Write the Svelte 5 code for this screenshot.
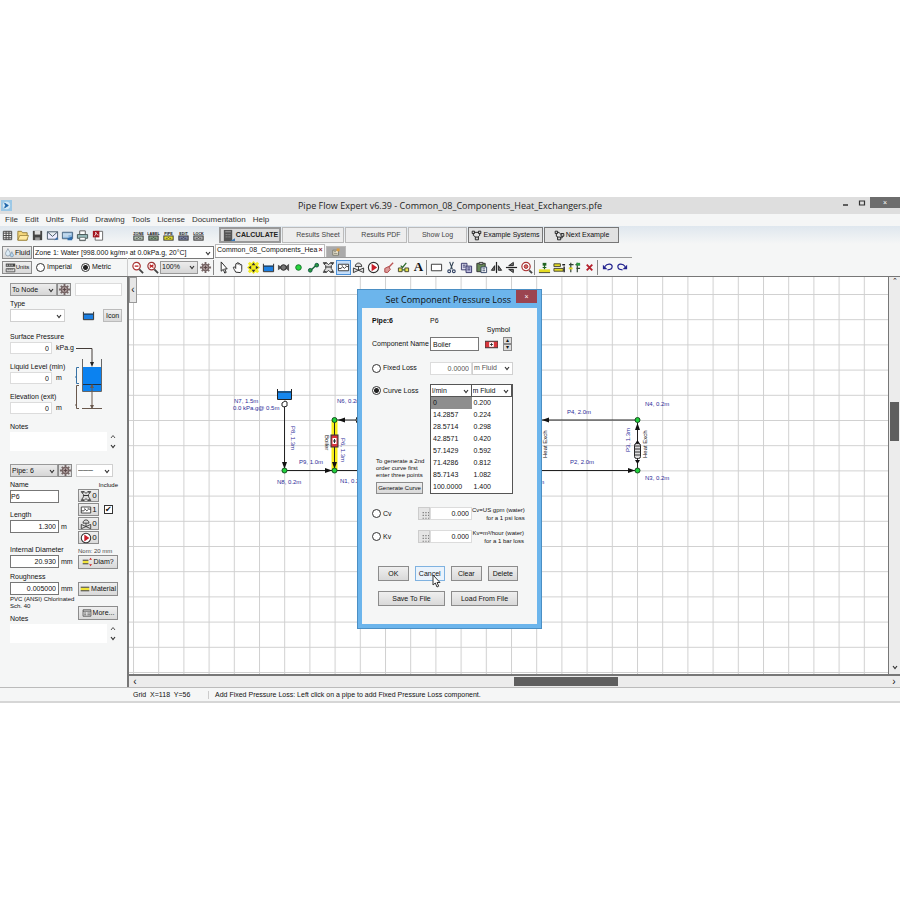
<script lang="ts">
	type Shape = [string, string?, string?, number?];

	// every icon sits on a 14 x 14 grid: [path, fill, stroke, stroke width]
	const icons: Record<string, Shape[]> = {
		sheet: [['M2.5 2.5h9v9h-9zM2.5 4.5h9M2.5 7h9M2.5 9.5h9M5.5 2.5v9M8.5 2.5v9', '#eee', '#444']],
		open: [
			['M2 4V2.5h4L7 4h5v8H2z', '#f5d77b', '#937b35'],
			['M4 7h9.500l-2 5H2z', '#ffe9a0', '#937b35', 0.8]
		],
		save: [
			['M2 2h10v10H2z', '#444'],
			['M4 2h6v4H4z', '#ddd'],
			['M4.500 9h5v3h-5z', '#999']
		],
		mail: [
			['M1.500 3h11v8h-11zM1.500 3l5.500 5 5.500-5', '#eef', '#456'],
			['M9 12l2.500-3 2 2z', '#3a70b0']
		],
		picture: [
			['M1.500 3.500h11v7h-11z', '#8fb8dd', '#46627d'],
			['M2 5.500h9M2 7.500h6', 'none', '#eef5fb'],
			['M7 10l5-2v4H7z', '#2f6cab']
		],
		print: [
			['M4 2h6v4H4zM4 9h6v3.500H4z', '#fff', '#555'],
			['M1.500 6h11v4h-11z', '#9bb', '#455'],
			['M4 9h6v3H4z', '#fff', '#455', 0.7]
		],
		pdf: [
			['M4.500 2.500h8v9.500h-8z', '#fff', '#666'],
			['M2 2h7v7H2z', '#a31620'],
			['M3.500 7.500c2-1 2-3 1.500-4 1 2 2 3 3 3', 'none', '#fff', 0.9]
		],
		calc: [
			['M2 1h9v12H2z', '#555'],
			['M3.500 3h6M4 6h1M6 6h1M8 6h1M4 8.500h1M6 8.500h1M8 8.500h1', 'none', '#aaa'],
			['M9 13h5v-3z', '#3a78b8']
		],
		systems: [['M1.500 1.500h3v3h-3zM9.500 1.500h3v3h-3zM5.500 9h4v3.500h-4zM4.500 3h5', '#ccc', '#222', 1.200], ['M3 4.500V7l3 2M11 4.500V7L9 9', 'none', '#222', 1.200]],
		next: [['M1.500 1.500h3v3h-3zM4.500 9h4v3.500h-4zM9 4.500h3.500V8H9z', '#ccc', '#222', 1.200], ['M4.500 3h2L9 6M3 4.500V8l2 1M10.500 8v2H8.500', 'none', '#222', 1.200]],
		drop: [['M5 2c-1 3-3 4-3 6.500a3 3 0 0 0 6 0C8 6 6 5 5 2z', '#dcebf5', '#789', 0.8], ['M10 6c0 2-2 3-2 4.500a2 2 0 0 0 4 0C12 9 10 8 10 6z', '#b8d8ee', '#68a', 0.8]],
		ruler: [['M1 2h12v4H1z', '#444'], ['M1.500 8.500h11v4h-11zM4 8.500v2M6.500 8.500v2M9 8.500v2', '#ddd', '#444'], ['M2 4h2M5 4h2M8 4h2', 'none', '#fff']],
		zoomOut: [['M2 5.500a4 4 0 1 0 8 0a4 4 0 1 0-8 0', '#fff', '#a33', 1.300], ['M9 9l4 4', 'none', '#444', 2], ['M4 5.500h4', 'none', '#b22', 1.400]],
		zoomFit: [['M2 5.500a4 4 0 1 0 8 0a4 4 0 1 0-8 0', '#fff', '#933', 1.300], ['M9 9l4 4', 'none', '#444', 2], ['M4 4l4 3M8 4L4 7', 'none', '#b22', 1.400]],
		gear: [['M7 1v12M1 7h12M3 3l8 8M11 3l-8 8', 'none', '#766', 2], ['M3.500 7a3.500 3.500 0 1 0 7 0a3.500 3.500 0 1 0-7 0', '#a99', '#655'], ['M7 5v4M5 7h4', 'none', '#544']],
		pointer: [['M4.500 1v10l2.300-2 1.500 4 1.600-.7-1.600-3.800H11z', '#fff', '#222']],
		hand: [['M4 12C3 10 1.500 8 1.500 7S3 6 4 8V3.500c0-1 1.500-1 1.500 0V2.500c0-1 1.700-1 1.700 0v1c0-1 1.600-1 1.600 0v1c0-1 1.700-1 1.700 0V9c0 2-1 3-1.500 3.500z', '#fff', '#222']],
		move: [['M7 0l7 7-7 7-7-7z', '#f4ed22'], ['M2 2l10 10M12 2L2 12', 'none', '#f4ed22', 3], ['M5 4.500h4L7 1.500zM5 9.500h4l-2 3zM4.500 5v4L1.500 7zM9.500 5v4l3-2z', '#333']],
		tank: [['M2 5h10v6H2z', '#1b7fe3'], ['M1.500 3v8.500h11V3M2 5.500h10', 'none', '#222']],
		valve: [['M1 4l5 3-5 3zM13 3v8L8 7z', '#555'], ['M4 7a3 3 0 1 0 6 0a3 3 0 1 0-6 0', '#777', '#222']],
		node: [['M4 7a3 3 0 1 0 6 0a3 3 0 1 0-6 0', '#27d43c', '#15702a']],
		pipe: [['M3.500 10.500l7-6.500', 'none', '#163', 1.600], ['M1.500 10a2 2 0 1 0 4 0a2 2 0 1 0-4 0M8.500 4.500a2 2 0 1 0 4 0a2 2 0 1 0-4 0', '#2b9b3e', '#154']],
		fitting: [['M2 3l3-1 2 2 2-2 3 1-2 2v3l2 3-3 1-2-2-2 2-3-1 2-3V5z', '#ddd', '#333'], ['M1 2h4M9 2h4M1 12h4M9 12h4M4 6.500h6', 'none', '#333', 1.200]],
		component: [['M1.500 3.500h11v7h-11z', '#fff', '#333'], ['M1.500 8h3l1.500-2 2 2 2-2h2.500M5 5h1M9 5h1', 'none', '#333']],
		control: [['M1.500 7.500v5l11-5v5z', '#ddd', '#333'], ['M7 10V6M3.500 6c0-5 7-5 7 0z', '#ddd', '#333']],
		pump: [['M1.500 7a5.500 5.500 0 1 0 11 0a5.500 5.500 0 1 0-11 0', '#fff', '#333', 1.200], ['M5 3l6 4-6 4z', '#c81e2a']],
		brush: [['M12 2L7 7', 'none', '#b55', 1.500], ['M7 6L3 8v4l3 .5L9 9z', '#d99', '#a44']],
		price: [['M1.500 7.500h4v4h-4zM8.500 7.500h4v4h-4z', '#e5e14b', '#443'], ['M4 5l2 2 4-5M5.500 9.500h3', 'none', '#2b692b', 1.300]],
		rect: [['M1.500 3.500h11v7h-11z', '#fff', '#333']],
		cut: [['M5 1l3 8M9 1L6 9', 'none', '#345', 1.200], ['M3 11a1.500 1.500 0 1 0 3 0a1.500 1.500 0 1 0-3 0M8 11a1.500 1.500 0 1 0 3 0a1.500 1.500 0 1 0-3 0', 'none', '#346', 1.200]],
		copy: [['M1.500 2.500h6v7h-6zM3 4.500h3M3 6.500h3', '#dde', '#336'], ['M6.500 5.500h6v7h-6zM8 7.500h3M8 9.500h3', '#bbd', '#336']],
		paste: [['M2 2.500h9v9H2z', '#685', '#333'], ['M4.500 1.500h4v2h-4z', '#ddd', '#333'], ['M6.500 6.500h6v6h-6zM8 8.500h3M8 10.500h3', '#fff', '#346']],
		flipH: [['M7 1v12', 'none', '#222', 1.300], ['M5 5L1.500 10H5zM9 5l3.500 5H9z', '#777', '#222']],
		flipV: [['M1 7h12', 'none', '#222', 1.300], ['M9 5V1.500L4 5zM9 9v3.500L4 9z', '#777', '#222']],
		find: [['M2 6a4.500 4.500 0 1 0 9 0a4.500 4.500 0 1 0-9 0', '#fff', '#a33', 1.300], ['M4.500 6a2 2 0 1 0 4 0a2 2 0 1 0-4 0', '#d66', '#933'], ['M10 10l3 3', 'none', '#444', 2]],
		joinNode: [['M1 9h12v3H1z', '#e5dc23'], ['M1 12.500h12', 'none', '#442'], ['M5 2h4v3H5z', '#262'], ['M7 4v5M5 7h4', 'none', '#262', 1.300]],
		pipes: [['M1 3h7v3H1zM1 8h10v3H1z', '#e5dc23', '#443'], ['M12 6v6M10 4h3', 'none', '#222', 1.500]],
		split: [['M3 2v10M10 2v10M1 4h5M8 4h5M1 8h3M9 8h4', 'none', '#343', 1.300], ['M1 7h4v2H1z', '#e5dc23'], ['M9 2h4v3H9z', '#2c9940']],
		remove: [['M4 4l6 6M10 4l-6 6', 'none', '#b4202c', 2]],
		undo: [['M4 6c3-4 8-3 8 0 0 3-3 3.500-5 3.500', 'none', '#23238f', 1.300], ['M2 4v5h5z', '#23238f']],
		redo: [['M10 6C7 2 2 3 2 6c0 3 3 3.500 5 3.500', 'none', '#23238f', 1.300], ['M12 4v5H7z', '#23238f']],
		symbol: [['M0 3.500h14v7H0z', '#d9363c', '#333'], ['M4.500 4.500h5v5h-5z', '#fff'], ['M7 5.500v3M5.500 7h3', 'none', '#333']],
		diameter: [['M1 5h8v4H1z', '#f0e43a'], ['M1 4.500h8M1 9.500h8', 'none', '#222', 1.200], ['M10 4h4l-2-3zM10 10h4l-2 3z', '#c22']],
		material: [['M1 5h12v4H1z', '#f0e43a'], ['M1 4.500h12M1 9.500h12', 'none', '#222', 1.200]],
		more: [['M1.500 2.500h11v9h-11zM1.500 4.500h11', '#eee', '#333'], ['M3 7h3M7.500 7h4M3 9.500h3M7.500 9.500h4', 'none', '#333']],
		pad: [['M4 5h1M7 5h1M10 5h1M4 8h1M7 8h1M10 8h1M4 11h1M7 11h1M10 11h1', 'none', '#555', 1.200]],
		newTab: [['M2.500 4.500h8v7h-8z', '#e9e2cf', '#665'], ['M8 2h4v4H8z', '#dd9c3c'], ['M4 6.500h3M4 9h5', 'none', '#776']]
	};

	const menu = ['File', 'Edit', 'Units', 'Fluid', 'Drawing', 'Tools', 'License', 'Documentation', 'Help'];
	const fileTools = ['sheet', 'open', 'save', 'mail', 'picture', 'print', 'pdf'];
	const listTools = [
		{ text: 'ZONE', color: '#b9c9ba' },
		{ text: 'LABEL', color: '#8ba98b' },
		{ text: 'PIPE', color: '#ece52b' },
		{ text: 'EDIT', color: '#7d86ad' },
		{ text: 'LOCK', color: '#b5b5b5' }
	];
	const drawTools = [
		['pointer', 'hand', 'move', 'tank', 'valve', 'node', 'pipe', 'fitting', 'component', 'control', 'pump', 'brush', 'price', 'text'],
		['rect', 'cut', 'copy', 'paste', 'flipH', 'flipV', 'find'],
		['joinNode', 'pipes', 'split', 'remove'],
		['undo', 'redo']
	];
	const includes = [
		{ icon: 'fitting', count: 0 },
		{ icon: 'component', count: 1 },
		{ icon: 'control', count: 0 },
		{ icon: 'pump', count: 0 }
	];
	const curve = [
		['0', '0.200'],
		['14.2857', '0.224'],
		['28.5714', '0.298'],
		['42.8571', '0.420'],
		['57.1429', '0.592'],
		['71.4286', '0.812'],
		['85.7143', '1.082'],
		['100.0000', '1.400']
	];

	let units = $state('metric');
	let lossType = $state('curve');
	let include = $state(true);
	let componentName = $state('Boiler');
</script>

{#snippet icon(name: string)}
	<svg class="icon" viewBox="0 0 14 14" aria-hidden="true">
		{#each icons[name] as [d, fill, stroke, width]}
			<path {d} fill={fill ?? 'none'} stroke={stroke ?? 'none'} stroke-width={width ?? 1} />
		{/each}
	</svg>
{/snippet}

{#snippet chevron()}
	<svg class="chevron" viewBox="0 0 6 6" aria-hidden="true"><path d="M1 2l2 2.500L5 2" fill="none" stroke="#333" stroke-width="1.200" /></svg>
{/snippet}

{#snippet dropdown(label: string, value: string, kind: string)}
	<span class="dropdown {kind}">
		<select aria-label={label}><option>{value}</option></select>
		{@render chevron()}
	</span>
{/snippet}

{#snippet notes(id: string)}
	<div class="notes">
		<textarea {id}></textarea>
		<div class="noteArrows">
			<svg viewBox="0 0 6 6"><path d="M1 4l2-2.500L5 4" fill="none" stroke="#555" /></svg>
			{@render chevron()}
		</div>
	</div>
{/snippet}

<div class="page">
	<div class="window">
		<header class="titleBar">
			<svg class="appIcon" viewBox="0 0 12 12"><rect width="12" height="12" fill="#9cc8e6" /><circle cx="6" cy="6" r="4" fill="#d3e9f6" /><path d="M4 3.500L8 6 4 8.500 5 6z" fill="#1a63a8" stroke="#1a63a8" /></svg>
			<h1>Pipe Flow Expert v6.39 - Common_08_Components_Heat_Exchangers.pfe</h1>
			<div class="windowButtons">
				<button aria-label="Minimize"><svg viewBox="0 0 8 8"><path d="M1 6h5" stroke="#333" stroke-width="1.500" /></svg></button>
				<button aria-label="Maximize"><svg viewBox="0 0 8 8"><path d="M1.500 2h5v4h-5z" fill="none" stroke="#333" stroke-width="1.200" /></svg></button>
				<button class="closeWindow" aria-label="Close">×</button>
			</div>
		</header>

		<nav class="menu">
			{#each menu as item}
				<button>{item}</button>
			{/each}
		</nav>

		<div class="mainTools">
			<div class="fileTools">
				{#each fileTools as tool}
					<button class="tool" aria-label={tool}>{@render icon(tool)}</button>
				{/each}
			</div>
			<div class="listTools">
				{#each listTools as tool}
					<button class="tool" aria-label={tool.text}>
						<svg class="icon" viewBox="0 0 14 14">
							<text x="7" y="6" text-anchor="middle" font-size="4" font-weight="bold" fill="#111">{tool.text}</text>
							<rect x="2" y="7.500" width="10" height="4.500" fill={tool.color} stroke="#333" />
							<path d="M4 10h2l1-1 1 1h2" fill="none" stroke="#333" stroke-width="0.8" />
						</svg>
					</button>
				{/each}
			</div>
			<div class="actions">
				<button class="action calculate">{@render icon('calc')}CALCULATE</button>
				<button class="action result">Results Sheet</button>
				<button class="action result">Results PDF</button>
				<button class="action log">Show Log</button>
				<button class="action example">{@render icon('systems')}Example Systems</button>
				<button class="action example">{@render icon('next')}Next Example</button>
			</div>
		</div>

		<div class="subTools">
			<div class="fluidRow">
				<button class="raised fluidButton">{@render icon('drop')}Fluid</button>
				{@render dropdown('Fluid zone', 'Zone 1: Water [998.000 kg/m³ at 0.0kPa.g, 20°C]', 'zone')}
			</div>
			<div class="tabs">
				<button class="tab"><span>Common_08_Components_Hea</span><b>×</b></button>
				<button class="tab newTab" aria-label="New tab">{@render icon('newTab')}</button>
			</div>
		</div>

		<div class="drawRow">
			<div class="unitsRow">
				<button class="raised fluidButton">{@render icon('ruler')}<small>Units</small></button>
				<label><input type="radio" value="imperial" bind:group={units} />Imperial</label>
				<label><input type="radio" value="metric" bind:group={units} />Metric</label>
			</div>
			<div class="drawTools">
				<button class="tool" aria-label="Zoom out">{@render icon('zoomOut')}</button>
				<button class="tool" aria-label="Zoom to fit">{@render icon('zoomFit')}</button>
				{@render dropdown('Zoom', '100%', 'zoom grey')}
				<button class="tool" aria-label="Settings">{@render icon('gear')}</button>
				{#each drawTools as group}
					<div class="toolGroup">
						{#each group as tool}
							<button class="tool" class:selected={tool === 'component'} aria-label={tool}>
								{#if tool === 'text'}
									<b class="textTool">A</b>
								{:else}
									{@render icon(tool)}
								{/if}
							</button>
						{/each}
					</div>
				{/each}
			</div>
		</div>

		<main class="workspace">
			<aside class="panel">
				<section class="nodePanel">
					<div class="row">
						{@render dropdown('Node', 'To Node', 'pick grey')}
						<button class="raised gear" aria-label="Node settings">{@render icon('gear')}</button>
						<input class="nodeName" aria-label="Node name" />
					</div>
					<div class="typeField">
						<span class="caption">Type</span>
						<div class="row">
							{@render dropdown('Type', '', 'type')}
							<span class="tankIcon">{@render icon('tank')}</span>
							<button class="raised iconButton">Icon</button>
						</div>
					</div>
					<div class="levels">
						<div class="levelFields">
							<div class="field"><label for="pressure">Surface Pressure</label><div class="row"><input id="pressure" class="number" value="0" /><span>kPa.g</span></div></div>
							<div class="field"><label for="level">Liquid Level (min)</label><div class="row"><input id="level" class="number" value="0" /><span>m</span></div></div>
							<div class="field"><label for="elevation">Elevation (exit)</label><div class="row"><input id="elevation" class="number" value="0" /><span>m</span></div></div>
						</div>
						<svg class="levelDrawing" viewBox="0 0 29 70">
							<path d="M1 9.500h16V23" fill="none" stroke="#443c38" />
							<path d="M15 23h4l-2 5z" fill="#222" />
							<path d="M8 28h18v24H8z" fill="#0b82f0" />
							<path d="M7.500 20v32.500h19V20" fill="none" stroke="#666" />
							<path d="M8 45.500h18" stroke="#234" />
							<path d="M17 46v24M7 69.500h20" stroke="#69584d" />
							<path d="M15 49l2-4 2 4zM15 66h4l-2 4z" fill="#69584d" />
							<path d="M4 28.500H1.500v16H4M1 38H0" fill="none" stroke="#3973a5" />
							<path d="M4 46.500H1.500v23H4M1 66H0" fill="none" stroke="#69584d" />
						</svg>
					</div>
					<label class="notesLabel" for="nodeNotes">Notes</label>
					{@render notes('nodeNotes')}
				</section>

				<section class="pipePanel">
					<div class="row">
						{@render dropdown('Pipe', 'Pipe:  6', 'pick grey')}
						<button class="raised gear" aria-label="Pipe settings">{@render icon('gear')}</button>
						{@render dropdown('Line style', '───', 'line')}
					</div>
					<div class="pipeFields">
						<div class="pipeLeft">
							<div class="field"><label for="pipeName">Name</label><input id="pipeName" class="wide" value="P6" /></div>
							<div class="field length"><label for="length">Length</label><div class="row"><input id="length" class="wide number" value="1.300" /><span>m</span></div></div>
							<div class="field diameter"><label for="diameter">Internal Diameter</label><div class="row"><input id="diameter" class="wide number" value="20.930" /><span>mm</span></div></div>
							<div class="field"><label for="roughness">Roughness</label><div class="row"><input id="roughness" class="wide number" value="0.005000" /><span>mm</span></div></div>
							<p class="material">PVC (ANSI) Chlorinated<br />Sch. 40</p>
							<label class="notesLabel" for="pipeNotes">Notes</label>
						</div>
						<div class="pipeRight">
							<label class="include" for="include">Include</label>
							<div class="includeRow">
								<div class="counts">
									{#each includes as item}
										<button class="raised">{@render icon(item.icon)}{item.count}</button>
									{/each}
								</div>
								<input id="include" type="checkbox" bind:checked={include} />
							</div>
							<span class="nominal">Nom: 20 mm</span>
							<button class="raised side">{@render icon('diameter')}Diam?</button>
							<button class="raised side materialButton">{@render icon('material')}Material</button>
							<button class="raised side moreButton">{@render icon('more')}More...</button>
						</div>
					</div>
					{@render notes('pipeNotes')}
				</section>
			</aside>

			<div class="canvasArea">
				<div class="canvasRow">
					<button class="collapse" aria-label="Collapse panel">‹</button>
					<svg class="canvas">
						<defs>
							<pattern id="grid" x="4" y="17" width="25.200" height="25.200" patternUnits="userSpaceOnUse">
								<path d="M0.500 0v25.200M0 0.500h25.200" stroke="#d0d0d0" stroke-width="1" />
							</pattern>
						</defs>
						<rect width="100%" height="100%" fill="url(#grid)" />
						<g class="pipes">
							<path d="M155.500 126V193.500H205.500M205.500 143H232M205.500 193.500H508.500V143H400" />
						</g>
						<path d="M205.500 143v50" stroke="#f7ee1c" stroke-width="6" />
						<path d="M205.500 143v50" stroke="#222" />
						<g class="arrows">
							<path d="M153 185h5l-2.500 7z" />
							<path d="M203 185h5l-2.500 7z" />
							<path d="M196 191v5l7-2.500z" />
							<path d="M216 140.500v5l-7-2.500z" />
							<path d="M420 140.500v5l-7-2.500z" />
							<path d="M499 191v5l7-2.500z" />
							<path d="M506 153h5l-2.500-7z" />
							<path d="M506 167h5l-2.500-4zM506 183h5l-2.500 4z" />
						</g>
						<path d="M149 114h13v8h-13z" fill="#1687ee" />
						<path d="M148.500 112v10.500h14V112M149 115h13" fill="none" stroke="#222" />
						<path d="M153 126l3-2 2 1v4l-3 1-2-1z" fill="#fff" stroke="#222" />
						<rect x="202" y="158" width="7" height="12" fill="#d9363c" stroke="#333" />
						<path d="M203.500 161h4v6h-4z" fill="#fff" />
						<path d="M205.500 162v4M204 164h3" stroke="#333" />
						<circle cx="231" cy="143" r="4" fill="#eee" stroke="#222" />
						<rect x="505.500" y="166.500" width="6" height="15" rx="2" fill="#ddd" stroke="#222" />
						<path d="M505 169h7M505 172h7M505 175h7M505 178h7" stroke="#333" />
						<g class="nodes">
							<circle cx="155.500" cy="193.500" r="2.500" />
							<circle cx="205.500" cy="193.500" r="2.500" />
							<circle cx="205.500" cy="143" r="2.500" />
							<circle cx="508.500" cy="143" r="2.500" />
							<circle cx="508.500" cy="193.500" r="2.500" />
						</g>
						<g class="names">
							<text x="105" y="126">N7, 1.5m</text>
							<text x="104" y="133">0.0 kPa.g@ 0.5m</text>
							<text x="208" y="126">N6, 0.2m</text>
							<text x="148" y="207">N8, 0.2m</text>
							<text x="211" y="206">N1, 0.2m</text>
							<text x="170" y="187">P9, 1.0m</text>
							<text x="438" y="137">P4, 2.0m</text>
							<text x="441" y="187">P2, 2.0m</text>
							<text x="516" y="129">N4, 0.2m</text>
							<text x="516" y="203">N3, 0.2m</text>
							<text x="391" y="207">N2, 0.2m</text>
							<text transform="translate(162 149) rotate(90)">P8, 1.3m</text>
							<text transform="translate(212 161) rotate(90)">P6, 1.3m</text>
							<text transform="translate(501 175) rotate(-90)">P3, 1.3m</text>
							<g class="parts">
								<text transform="translate(196 158) rotate(90)">Boiler</text>
								<text transform="translate(418 181) rotate(-90)">Heat Exch</text>
								<text transform="translate(518 181) rotate(-90)">Heat Exch</text>
							</g>
						</g>
					</svg>
					<div class="vScroll"><span>⌃</span><div class="vThumb"></div>{@render chevron()}</div>
				</div>
				<div class="hScroll"><span>‹</span><div class="hThumb"></div><span>›</span></div>
			</div>
		</main>

		<footer class="status">
			<span class="gridPos">Grid&nbsp; X=118&nbsp; Y=56</span>
			<span>Add Fixed Pressure Loss: Left click on a pipe to add Fixed Pressure Loss component.</span>
		</footer>

		<div class="dialog" role="dialog" aria-labelledby="dialogTitle">
			<header>
				<h2 id="dialogTitle">Set Component Pressure Loss</h2>
				<button class="closeDialog" aria-label="Close dialog">×</button>
			</header>
			<div class="dialogBody">
				<div class="formGrid">
					<b class="pipeTitle">Pipe:6</b>
					<span class="pipeTitle">P6</span>

					<label class="nameLabel" for="componentName">Component Name</label>
					<div class="nameRow">
						<input id="componentName" bind:value={componentName} />
						<div class="symbol">
							<span>Symbol</span>
							<div class="symbolRow">
								{@render icon('symbol')}
								<div class="spinner"><button aria-label="Previous symbol">▴</button><button aria-label="Next symbol">▾</button></div>
							</div>
						</div>
					</div>

					<label class="choice fixed"><input type="radio" value="fixed" bind:group={lossType} />Fixed Loss</label>
					<div class="row fixed faded">
						<input class="number" aria-label="Fixed loss" value="0.0000" />
						{@render dropdown('Fixed loss unit', 'm Fluid', 'unit')}
					</div>

					<div class="curveLeft">
						<label class="choice"><input type="radio" value="curve" bind:group={lossType} />Curve Loss</label>
						<div class="generate">
							<p>To generate a 2nd<br />order curve first<br />enter three points</p>
							<button class="raised">Generate Curve</button>
						</div>
					</div>
					<div class="curveTable">
						<div class="row">
							{@render dropdown('Flow unit', 'l/min', 'unit')}
							{@render dropdown('Loss unit', 'm Fluid', 'unit')}
						</div>
						<table>
							<tbody>
								{#each curve as [flow, loss], i}
									<tr><td class:current={i === 0}>{flow}</td><td>{loss}</td></tr>
								{/each}
							</tbody>
						</table>
					</div>
				</div>

				<div class="coefficient">
					<label class="choice"><input type="radio" value="cv" bind:group={lossType} />Cv</label>
					<button class="pad" aria-label="Cv calculator">{@render icon('pad')}</button>
					<input class="number" aria-label="Cv value" value="0.000" />
					<p>Cv=US gpm (water)<br />for a 1 psi loss</p>
				</div>
				<div class="coefficient">
					<label class="choice"><input type="radio" value="kv" bind:group={lossType} />Kv</label>
					<button class="pad" aria-label="Kv calculator">{@render icon('pad')}</button>
					<input class="number" aria-label="Kv value" value="0.000" />
					<p>Kv=m³/hour (water)<br />for a 1 bar loss</p>
				</div>

				<div class="dialogButtons four">
					<button class="raised">OK</button>
					<button class="raised hot">Cancel</button>
					<button class="raised">Clear</button>
					<button class="raised">Delete</button>
				</div>
				<div class="dialogButtons two">
					<button class="raised">Save To File</button>
					<button class="raised">Load From File</button>
				</div>
			</div>
			<svg class="cursor" viewBox="0 0 9 14"><path d="M1 1v10l2.300-2 1.700 4 1.700-.8-1.700-3.700H8z" fill="#fff" stroke="#333" /></svg>
		</div>
	</div>
</div>

<style>
	:global(body) {
		background: #fff;
	}

	.page {
		height: 100vh;
		min-height: 900px;
		box-sizing: border-box;
		padding: 197px 0;
		font-family: 'Liberation Sans', Arial, sans-serif;
		font-size: 7px;
		line-height: 8px;
		color: #111;
	}

	.page * {
		box-sizing: border-box;
	}

	.window {
		position: relative;
		display: flex;
		flex-direction: column;
		height: 100%;
		background: #f5f6f6;
		border-bottom: 2px solid #d6d6d6;
	}

	button,
	input,
	select,
	textarea {
		font: inherit;
		color: inherit;
		margin: 0;
		padding: 0;
		border: 0;
		border-radius: 0;
		background: none;
		outline: none;
	}

	h1,
	h2,
	p {
		margin: 0;
		font-weight: normal;
	}

	.row {
		display: flex;
		align-items: center;
	}

	.icon {
		display: block;
		flex: none;
		width: 13px;
		height: 13px;
	}

	.chevron {
		width: 6px;
		height: 6px;
	}

	.raised {
		display: flex;
		align-items: center;
		justify-content: center;
		background: linear-gradient(#efefef, #d9d9d9);
		border: 1px solid #8c8c8c;
	}

	input:not([type]),
	textarea {
		background: #fff;
		border: 1px solid #dcdcdc;
	}

	input.number {
		text-align: right;
		padding-right: 2px;
	}

	input[type='radio'] {
		appearance: none;
		width: 9px;
		height: 9px;
		margin-right: 2px;
		border: 1px solid #333;
		border-radius: 50%;
		background: #fff;
	}

	input[type='radio']:checked {
		background: radial-gradient(circle, #222 0 2px, #fff 3px);
	}

	.dropdown {
		display: grid;
		align-items: center;
		height: 13px;
		background: #fff;
		border: 1px solid #d0d0d0;
	}

	.dropdown select {
		grid-area: 1 / 1;
		appearance: none;
		width: 100%;
		padding-left: 1px;
	}

	.dropdown .chevron {
		grid-area: 1 / 1;
		justify-self: end;
		margin-right: 2px;
		pointer-events: none;
	}

	.dropdown.grey {
		background: linear-gradient(#ececec, #d6d6d6);
		border-color: #999;
	}

	/* title bar and menu */
	.titleBar {
		display: grid;
		grid-template-columns: 60px 1fr 60px;
		align-items: center;
		height: 17px;
		background: #dedede;
	}

	.titleBar h1 {
		font-family: 'Open Sans', sans-serif;
		font-size: 9px;
		text-align: center;
		color: #222;
	}

	.appIcon {
		width: 11px;
		height: 11px;
		margin-left: 1px;
	}

	.windowButtons {
		display: flex;
		justify-content: flex-end;
		align-self: start;
		gap: 8px;
	}

	.windowButtons svg {
		display: block;
		width: 8px;
		height: 8px;
	}

	.closeWindow {
		width: 30px;
		height: 11px;
		margin-left: -4px;
		background: #6d6d6d;
		color: #fff;
	}

	.menu {
		display: flex;
		gap: 7px;
		height: 12px;
		padding-left: 5px;
		font-size: 8px;
		color: #333;
	}

	/* main tool bar */
	.mainTools {
		display: flex;
		height: 18px;
		background: linear-gradient(#dfe7ee, #f5f6f6);
		align-items: center;
	}

	.tool {
		display: flex;
		align-items: center;
		justify-content: center;
		width: 15px;
		height: 15px;
	}

	.fileTools {
		display: flex;
		width: 131px;
	}

	.listTools {
		display: flex;
		width: 88px;
	}

	.actions {
		display: flex;
		gap: 1px;
	}

	.action {
		display: flex;
		align-items: center;
		justify-content: center;
		gap: 1px;
		height: 16px;
		background: #ededed;
		border: 1px solid #bbb;
		color: #444;
		white-space: nowrap;
	}

	.calculate {
		width: 62px;
		font-weight: bold;
		color: #222;
		background: #dadada;
		border: 2px solid #999;
	}

	.result {
		width: 62px;
		padding-left: 10px;
	}

	.log {
		width: 59px;
	}

	.example {
		width: 75px;
		color: #111;
		background: #e1e1e1;
		border: 1px solid #777;
	}

	.example .icon {
		width: 11px;
		height: 11px;
	}

	.subTools {
		display: flex;
		height: 14px;
	}

	.fluidRow {
		display: flex;
		gap: 1px;
		width: 215px;
		padding: 2px 0 0 2px;
	}

	.fluidButton {
		width: 30px;
		height: 13px;
	}

	.fluidButton .icon {
		width: 11px;
		height: 11px;
	}

	.zone {
		width: 181px;
		border-color: #777;
	}

	.tabs {
		display: flex;
		align-items: flex-end;
		gap: 1px;
		width: 417px;
		border-bottom: 1px solid #999;
	}

	.tab {
		display: flex;
		gap: 1px;
		height: 13px;
		padding: 1px;
		background: #fff;
		border: 1px solid #bbb;
		border-bottom: 0;
		white-space: nowrap;
	}

	.tab b {
		color: #8d2525;
	}

	.newTab {
		justify-content: center;
		width: 20px;
		height: 11px;
		padding: 0;
		background: #aaa;
	}

	.newTab .icon {
		width: 10px;
		height: 10px;
	}

	.drawRow {
		display: flex;
		height: 19px;
		border-bottom: 1px solid #777;
	}

	.unitsRow {
		display: flex;
		align-items: center;
		gap: 4px;
		width: 128px;
		padding-left: 2px;
		border-right: 1px solid #ccc;
	}

	.unitsRow label {
		display: flex;
		align-items: center;
		width: 41px;
	}

	small {
		font-size: 6px;
	}

	.drawTools {
		display: flex;
		align-items: center;
		padding-left: 2px;
	}

	.zoom {
		width: 38px;
	}

	.toolGroup {
		display: flex;
		border-left: 1px solid #888;
		padding-left: 2px;
	}

	.selected {
		background: #c4defa;
		border: 1px solid #4a90d9;
	}

	.textTool {
		font-family: 'Liberation Serif', serif;
		font-size: 13px;
	}

	/* left panel */
	.workspace {
		display: flex;
		flex: 1;
		min-height: 0;
	}

	.panel {
		flex: none;
		width: 129px;
		padding: 6px 5px 0 10px;
		border-right: 2px solid #777;
	}

	.panel .row {
		height: 13px;
	}

	.pick {
		width: 48px;
	}

	.gear {
		width: 14px;
		height: 13px;
		background: #ddd;
	}

	.nodeName {
		width: 47px;
		height: 13px;
		margin-left: 4px;
	}

	.typeField {
		padding: 4px 0 11px;
	}

	.caption {
		display: block;
		margin-bottom: 1px;
	}

	.type {
		width: 56px;
	}

	.tankIcon {
		margin: 0 8px 0 17px;
	}

	.iconButton {
		width: 19px;
		height: 13px;
		border-color: #bbb;
	}

	.levels {
		display: flex;
	}

	.levelFields {
		width: 65px;
	}

	.levels .field {
		margin-bottom: 9px;
	}

	.field label,
	.notesLabel {
		display: block;
		white-space: nowrap;
		margin-bottom: 1px;
	}

	.levels .row {
		height: 12px;
		gap: 4px;
	}

	.levels input {
		width: 42px;
		height: 12px;
	}

	.levelDrawing {
		flex: none;
		width: 29px;
		height: 70px;
		margin-top: 6px;
	}

	.notes {
		display: flex;
		width: 108px;
		height: 19px;
	}

	.notes textarea {
		width: 97px;
		border: 0;
		resize: none;
	}

	.noteArrows {
		display: flex;
		flex-direction: column;
		align-items: center;
		justify-content: space-around;
		width: 11px;
	}

	.noteArrows svg {
		width: 6px;
		height: 6px;
	}

	.pipePanel {
		margin-top: 13px;
	}

	.line {
		width: 37px;
		margin-left: 4px;
	}

	.pipeFields {
		display: grid;
		grid-template-columns: 68px 1fr;
		padding-top: 4px;
	}

	.wide {
		width: 49px;
		height: 13px;
	}

	.pipeLeft input.wide {
		border-color: #777;
	}

	.pipeLeft .row {
		gap: 2px;
	}

	.pipeLeft .field {
		margin-bottom: 5px;
	}

	.pipeLeft .length {
		padding-top: 3px;
		margin-bottom: 13px;
	}

	.material {
		font-size: 6px;
		line-height: 7px;
		white-space: nowrap;
		margin: -4px 0 5px;
	}

	.include {
		display: block;
		font-size: 6px;
		text-align: right;
		padding-right: 4px;
	}

	.includeRow {
		display: flex;
		align-items: flex-start;
		gap: 5px;
	}

	.counts {
		display: flex;
		flex-direction: column;
		gap: 1px;
	}

	.counts button {
		width: 21px;
		height: 13px;
		font-size: 8px;
	}

	.counts .icon {
		width: 12px;
		height: 12px;
	}

	input[type='checkbox'] {
		width: 9px;
		height: 9px;
		margin-top: 16px;
		appearance: none;
		border: 1px solid #333;
		background: #fff;
	}

	input[type='checkbox']:checked::before {
		content: '✔';
		display: block;
		font-family: 'DejaVu Sans', sans-serif;
		font-size: 8px;
		line-height: 7px;
	}

	.nominal {
		display: block;
		font-size: 6px;
		margin-top: 3px;
		color: #444;
	}

	.side {
		width: 40px;
		height: 14px;
		gap: 1px;
	}

	.side .icon {
		width: 10px;
		height: 10px;
	}

	.materialButton {
		margin-top: 13px;
	}

	.moreButton {
		margin-top: 10px;
	}

	/* drawing canvas */
	.canvasArea {
		display: flex;
		flex: 1;
		flex-direction: column;
		min-width: 0;
	}

	.canvasRow {
		display: grid;
		grid-template-columns: 1fr 11px;
		flex: 1;
		min-height: 0;
		border-bottom: 2px solid #777;
	}

	.collapse {
		grid-area: 1 / 1;
		z-index: 1;
		width: 8px;
		height: 26px;
		background: #e6e6e6;
		border: 1px solid #999;
		font-size: 10px;
	}

	.canvas {
		grid-area: 1 / 1;
		width: 100%;
		height: 100%;
		background: #fff;
		border-right: 1px solid #777;
	}

	.pipes path {
		fill: none;
		stroke: #222;
	}

	.arrows path {
		fill: #111;
	}

	.nodes circle {
		fill: #1fd13b;
		stroke: #174d20;
	}

	.names {
		font-size: 6px;
		fill: #2a2a98;
	}

	.parts {
		fill: #111;
	}

	.vScroll {
		display: grid;
		grid-template-rows: 12px 29fr 10fr 57fr 10px;
		justify-items: center;
		background: #ececec;
	}

	.vScroll .chevron {
		grid-row: 5;
	}

	.vThumb {
		grid-row: 3;
		width: 9px;
		background: #5f5f5f;
	}

	.hScroll {
		display: grid;
		grid-template-columns: 12px 373fr 104fr 270fr 12px;
		align-items: center;
		height: 11px;
		background: #ececec;
		font-size: 10px;
		text-align: center;
	}

	.hThumb {
		grid-column: 3;
		height: 9px;
		background: #5f5f5f;
	}

	.hScroll span:last-child {
		grid-column: 5;
	}

	.status {
		display: flex;
		align-items: center;
		height: 14px;
		padding-left: 133px;
		border-top: 1px solid #bbb;
		font-size: 7px;
	}

	.gridPos {
		width: 76px;
		margin-right: 6px;
		border-right: 1px solid #ccc;
	}

	/* dialog */
	.dialog {
		position: absolute;
		left: 357px;
		top: 92px;
		width: 185px;
		padding: 0 4px 4px;
		background: #6cb5ec;
		border: 1px solid #4b8fc4;
	}

	.dialog header {
		display: flex;
		justify-content: flex-end;
		height: 18px;
	}

	.dialog h2 {
		flex: 1;
		padding-right: 5px;
		font-family: 'Open Sans', sans-serif;
		font-size: 9px;
		line-height: 20px;
		text-align: right;
		color: #111;
	}

	.closeDialog {
		width: 21px;
		height: 13px;
		background: #9b4450;
		color: #fff;
	}

	.dialogBody {
		background: #f5f6f6;
		padding: 8px 13px 18px 10px;
	}

	.formGrid {
		display: grid;
		grid-template-columns: 58px 1fr;
	}

	.pipeTitle {
		line-height: 10px;
	}

	.nameLabel {
		align-self: end;
		padding-bottom: 3px;
		white-space: nowrap;
	}

	.nameRow {
		display: flex;
		align-items: flex-end;
		gap: 6px;
	}

	#componentName {
		width: 49px;
		height: 14px;
		padding-left: 2px;
		border-color: #777;
	}

	.symbol span {
		display: block;
		text-align: center;
	}

	.symbolRow {
		display: flex;
		align-items: center;
		gap: 5px;
		margin-top: 3px;
	}

	.spinner {
		display: grid;
		width: 9px;
	}

	.spinner button {
		height: 7px;
		line-height: 5px;
		font-size: 6px;
		background: #ddd;
		border: 1px solid #888;
	}

	.choice {
		display: flex;
		align-items: center;
		height: 13px;
		white-space: nowrap;
	}

	.fixed {
		height: 14px;
		margin: 10px 0 9px;
	}

	.faded {
		color: #555;
	}

	.fixed .number {
		width: 42px;
		height: 13px;
	}

	.unit {
		width: 41px;
	}

	.generate {
		display: flex;
		flex-direction: column;
		align-items: flex-start;
		gap: 3px;
		padding: 61px 0 0 4px;
		font-size: 6px;
		line-height: 7px;
		white-space: nowrap;
	}

	.generate button {
		height: 12px;
		width: 47px;
	}

	.curveTable {
		width: 83px;
		border: 1px solid #555;
	}

	.curveTable .unit {
		height: 12px;
		border-color: #555;
		border-width: 0 1px 1px 0;
	}

	table {
		width: 100%;
		border-collapse: collapse;
		background: #fff;
	}

	td {
		width: 50%;
		height: 12px;
		padding: 0 0 0 2px;
	}

	.current {
		background: #8e8e8e;
	}

	.coefficient {
		display: grid;
		grid-template-columns: 46px 12px 42px 1fr;
		align-items: center;
		height: 23px;
	}

	.formGrid + .coefficient {
		margin-top: 8px;
	}

	.coefficient .number,
	.pad {
		height: 13px;
	}

	.pad {
		background: #e5e5e5;
		border: 1px solid #ccc;
		overflow: hidden;
	}

	.coefficient p {
		font-size: 6px;
		line-height: 8px;
		text-align: right;
		white-space: nowrap;
	}

	.dialogButtons {
		display: grid;
		gap: 6px;
		padding: 18px 6px 0;
	}

	.dialogButtons button {
		height: 15px;
	}

	.four {
		grid-template-columns: repeat(4, 1fr);
	}

	.two {
		grid-template-columns: repeat(2, 1fr);
		padding-top: 10px;
	}

	.hot {
		background: #eaf3fc;
		border-color: #7fb2e0;
	}

	.cursor {
		position: absolute;
		left: 74px;
		top: 284px;
		width: 9px;
		height: 14px;
	}
</style>
